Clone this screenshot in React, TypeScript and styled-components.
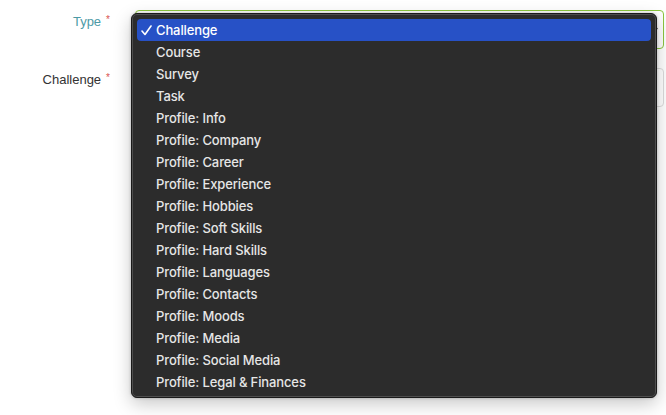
import React from "react";
import styled, { createGlobalStyle } from "styled-components";

const Global = createGlobalStyle`
  html, body { margin: 0; padding: 0; background: #ffffff; }
  body { font-family: "Inter", "Liberation Sans", sans-serif; }
  * { box-sizing: border-box; }
`;

const Page = styled.div`
  position: relative;
  width: 666px;
  height: 415px;
  overflow: hidden;
  background: #ffffff;
`;

const Form = styled.div`
  display: flex;
  flex-direction: column;
  gap: 19px;
  padding-top: 10px;
`;

const Row = styled.div`
  display: grid;
  grid-template-columns: 110px 1fr;
  column-gap: 25px;
  padding-right: 2px;
`;

const Label = styled.div<{ $accent?: boolean }>`
  text-align: right;
  font-family: "Liberation Sans", Arial, sans-serif;
  font-size: 13px;
  line-height: 20px;
  color: ${(p) => (p.$accent ? "#4c9aa6" : "#333333")};
`;

const Star = styled.span`
  color: #d9534f;
  font-size: 10px;
  margin-left: 5px;
  vertical-align: 3px;
`;

const Field = styled.div<{ $focus?: boolean }>`
  height: 39px;
  border-radius: 4px;
  border: 1px solid ${(p) => (p.$focus ? "#8cc63f" : "#dcdcdc")};
  background: #ffffff;
  position: relative;
`;

const Chevron = styled.div`
  position: absolute;
  right: 6px;
  top: 15px;
  width: 5px;
  height: 5px;
  border-right: 1.5px solid #555;
  border-bottom: 1.5px solid #555;
  transform: rotate(45deg);
`;

const Menu = styled.div`
  position: absolute;
  left: 131px;
  top: 13px;
  width: 526px;
  height: 385px;
  background: #2c2c2c;
  border-radius: 6px;
  border: 1px solid #1a1a1a;
  box-shadow: inset 0 0 0 1px #4e4e4e, 0 6px 18px rgba(0, 0, 0, 0.22),
    0 0 3px rgba(0, 0, 0, 0.25);
  padding: 5px 5px;
  display: flex;
  flex-direction: column;
`;

const Item = styled.div<{ $selected?: boolean }>`
  position: relative;
  height: 22px;
  line-height: 22px;
  padding-left: 19px;
  border-radius: 4px;
  font-size: 13px;
  font-weight: 500;
  letter-spacing: -0.12px;
  color: ${(p) => (p.$selected ? "#ffffff" : "#e6e6e6")};
  background: ${(p) => (p.$selected ? "#2751c6" : "transparent")};
`;

const Check = styled.svg`
  position: absolute;
  left: 4px;
  top: 6px;
`;

const options = [
  "Challenge",
  "Course",
  "Survey",
  "Task",
  "Profile: Info",
  "Profile: Company",
  "Profile: Career",
  "Profile: Experience",
  "Profile: Hobbies",
  "Profile: Soft Skills",
  "Profile: Hard Skills",
  "Profile: Languages",
  "Profile: Contacts",
  "Profile: Moods",
  "Profile: Media",
  "Profile: Social Media",
  "Profile: Legal & Finances",
];

export default function App() {
  return (
    <Page>
      <Global />
      <Form>
        <Row>
          <Label $accent>
            Type<Star>*</Star>
          </Label>
          <Field $focus>
            <Chevron />
          </Field>
        </Row>
        <Row>
          <Label>
            Challenge<Star>*</Star>
          </Label>
          <Field />
        </Row>
      </Form>
      <Menu>
        {options.map((o, i) => (
          <Item key={o} $selected={i === 0}>
            {i === 0 && (
              <Check width="11" height="11" viewBox="0 0 11 11">
                <polyline
                  points="1,6 4,9.5 10,1"
                  fill="none"
                  stroke="#ffffff"
                  strokeWidth="1.6"
                  strokeLinecap="round"
                  strokeLinejoin="round"
                />
              </Check>
            )}
            {o}
          </Item>
        ))}
      </Menu>
    </Page>
  );
}
